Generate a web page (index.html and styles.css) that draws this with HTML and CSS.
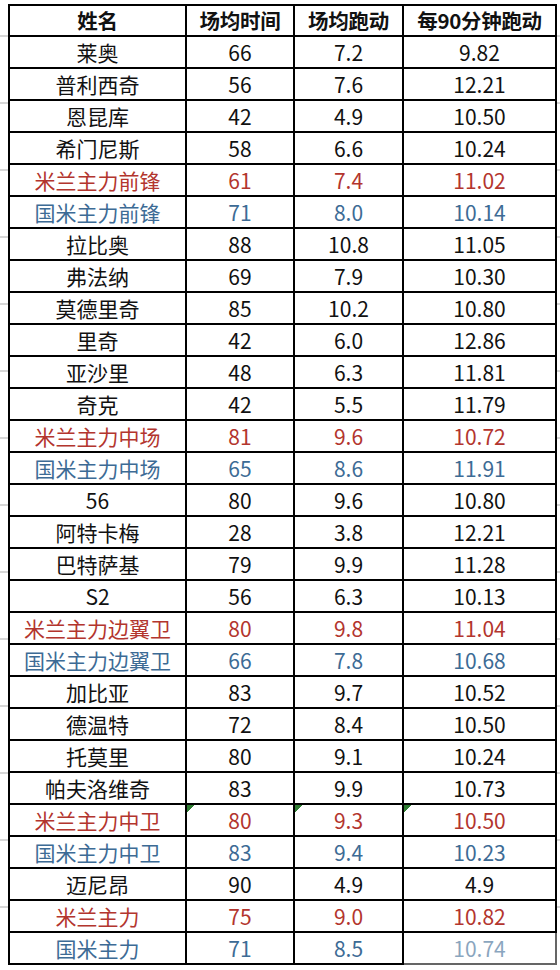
FILE: index.html
```html
<!DOCTYPE html>
<html lang="zh">
<head>
<meta charset="utf-8">
<link rel="stylesheet" href="styles.css">
</head>
<body>
<div class="sheet">
<table class="stats">
  <colgroup>
    <col class="c1"><col class="c2"><col class="c3"><col class="c4">
  </colgroup>
  <thead>
    <tr><th>姓名</th><th>场均时间</th><th>场均跑动</th><th>每90分钟跑动</th></tr>
  </thead>
  <tbody>
    <tr><td>莱奥</td><td>66</td><td>7.2</td><td>9.82</td></tr>
    <tr><td>普利西奇</td><td>56</td><td>7.6</td><td>12.21</td></tr>
    <tr><td>恩昆库</td><td>42</td><td>4.9</td><td>10.50</td></tr>
    <tr><td>希门尼斯</td><td>58</td><td>6.6</td><td>10.24</td></tr>
    <tr class="red"><td>米兰主力前锋</td><td>61</td><td>7.4</td><td>11.02</td></tr>
    <tr class="blue"><td>国米主力前锋</td><td>71</td><td>8.0</td><td>10.14</td></tr>
    <tr><td>拉比奥</td><td>88</td><td>10.8</td><td>11.05</td></tr>
    <tr><td>弗法纳</td><td>69</td><td>7.9</td><td>10.30</td></tr>
    <tr><td>莫德里奇</td><td>85</td><td>10.2</td><td>10.80</td></tr>
    <tr><td>里奇</td><td>42</td><td>6.0</td><td>12.86</td></tr>
    <tr><td>亚沙里</td><td>48</td><td>6.3</td><td>11.81</td></tr>
    <tr><td>奇克</td><td>42</td><td>5.5</td><td>11.79</td></tr>
    <tr class="red"><td>米兰主力中场</td><td>81</td><td>9.6</td><td>10.72</td></tr>
    <tr class="blue"><td>国米主力中场</td><td>65</td><td>8.6</td><td>11.91</td></tr>
    <tr><td>56</td><td>80</td><td>9.6</td><td>10.80</td></tr>
    <tr><td>阿特卡梅</td><td>28</td><td>3.8</td><td>12.21</td></tr>
    <tr><td>巴特萨基</td><td>79</td><td>9.9</td><td>11.28</td></tr>
    <tr><td>S2</td><td>56</td><td>6.3</td><td>10.13</td></tr>
    <tr class="red"><td>米兰主力边翼卫</td><td>80</td><td>9.8</td><td>11.04</td></tr>
    <tr class="blue"><td>国米主力边翼卫</td><td>66</td><td>7.8</td><td>10.68</td></tr>
    <tr><td>加比亚</td><td>83</td><td>9.7</td><td>10.52</td></tr>
    <tr><td>德温特</td><td>72</td><td>8.4</td><td>10.50</td></tr>
    <tr><td>托莫里</td><td>80</td><td>9.1</td><td>10.24</td></tr>
    <tr><td>帕夫洛维奇</td><td>83</td><td>9.9</td><td>10.73</td></tr>
    <tr class="red"><td>米兰主力中卫</td><td class="flag">80</td><td class="flag">9.3</td><td class="flag">10.50</td></tr>
    <tr class="blue"><td>国米主力中卫</td><td>83</td><td>9.4</td><td>10.23</td></tr>
    <tr><td>迈尼昂</td><td>90</td><td>4.9</td><td>4.9</td></tr>
    <tr class="red"><td>米兰主力</td><td>75</td><td>9.0</td><td>10.82</td></tr>
    <tr class="blue"><td>国米主力</td><td>71</td><td>8.5</td><td class="mark">10.74</td></tr>
  </tbody>
</table>
</div>
</body>
</html>
```
FILE: styles.css
```css
html, body {
  margin: 0;
  padding: 0;
  background: #fff;
}
body {
  width: 560px;
  height: 970px;
  overflow: hidden;
  font-family: "Noto Sans CJK SC", "Noto Sans", sans-serif;
  background-image: repeating-linear-gradient(to bottom, transparent 0, transparent 35px, #d6d6d6 35px, #d6d6d6 37px, transparent 37px, transparent 67px);
  background-position: 0 0;
}
.sheet {
  padding: 4px 0 0 8px;
}
.stats {
  border-collapse: separate;
  border-spacing: 0;
  background: #fff;
  border-top: 2px solid #000;
  border-left: 2px solid #000;
  table-layout: fixed;
  width: 547px;
}
.c1 { width: 177px; }
.c2 { width: 108px; }
.c3 { width: 109px; }
.c4 { width: 153px; }
.stats th, .stats td {
  border-right: 2px solid #000;
  border-bottom: 2px solid #000;
  padding: 0;
  text-align: center;
  white-space: nowrap;
  color: #111;
}
.stats th {
  height: 29px;
  line-height: 29px;
  font-size: 20.5px;
  font-weight: 700;
  letter-spacing: -0.3px;
}
.stats td {
  height: 30px;
  line-height: 30px;
  font-size: 21px;
  font-weight: 400;
}
.stats tr.red td { color: #b3352e; }
.stats tr.blue td { color: #3d6b95; }
.stats td.flag {
  background-image: linear-gradient(135deg, #2e7d32 0, #2e7d32 5px, transparent 5px);
  background-repeat: no-repeat;
  background-size: 8px 8px;
}
.stats td.mark {
  opacity: 0.6;
}
```
